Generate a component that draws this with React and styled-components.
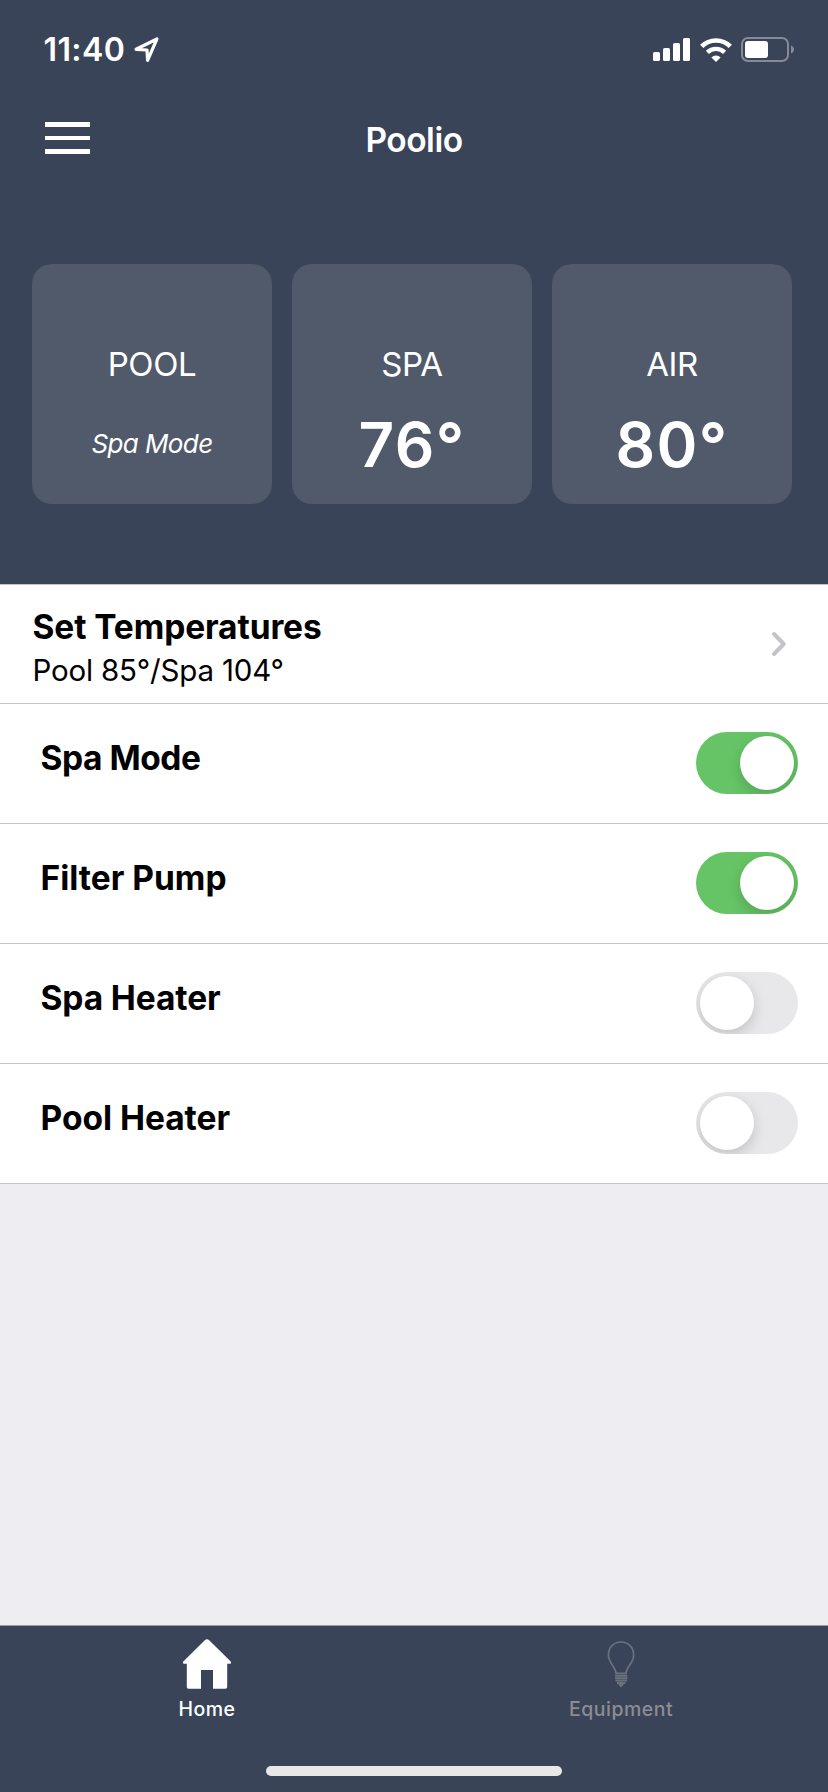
import React from 'react';
import styled, { createGlobalStyle } from 'styled-components';

class App extends React.Component {
  constructor(props) {
    super(props);
    this.state = {
      temps: [
        { name: 'POOL', note: 'Spa Mode' },
        { name: 'SPA', value: '76°' },
        { name: 'AIR', value: '80°' }
      ],
      switches: [
        { name: 'Spa Mode', on: true, tracking: -0.45 },
        { name: 'Filter Pump', on: true, tracking: 0 },
        { name: 'Spa Heater', on: false, tracking: -0.1 },
        { name: 'Pool Heater', on: false, tracking: -0.03 }
      ]
    };
    this.toggle = this.toggle.bind(this);
  }

  toggle(index) {
    this.setState({
      switches: this.state.switches.map((item, i) => (
        i === index ? { ...item, on: !item.on } : item
      ))
    });
  }

  render() {
    return (
      <Screen>
        <GlobalStyle />
        <Header>
          <StatusBar>
            <Time>11:40</Time>
            <LocationIcon />
            <StatusIcons>
              <SignalIcon />
              <WifiIcon />
              <BatteryIcon />
            </StatusIcons>
          </StatusBar>
          <NavBar>
            <MenuButton aria-label="Menu">
              <MenuLine />
              <MenuLine />
              <MenuLine />
            </MenuButton>
            <Title>Poolio</Title>
          </NavBar>
          <Cards>
            {this.state.temps.map((temp) => (
              <Card key={temp.name}>
                <CardName>{temp.name}</CardName>
                {temp.value ? <Degrees>{temp.value}</Degrees> : <Note>{temp.note}</Note>}
              </Card>
            ))}
          </Cards>
        </Header>

        <List>
          <TemperatureRow>
            <div>
              <RowTitle $tracking={-0.1}>Set Temperatures</RowTitle>
              <RowDetail>Pool 85°/Spa 104°</RowDetail>
            </div>
            <ChevronIcon />
          </TemperatureRow>
          {this.state.switches.map((item, i) => (
            <SwitchRow key={item.name}>
              <SwitchName $tracking={item.tracking}>{item.name}</SwitchName>
              <Track $on={item.on} role="switch" aria-checked={item.on} onClick={() => this.toggle(i)}>
                <Thumb />
              </Track>
            </SwitchRow>
          ))}
        </List>

        <Filler />

        <Footer>
          <Tabs>
            <Tab>
              <HomeIcon />
              <TabName $active $tracking={0.46}>Home</TabName>
            </Tab>
            <Tab>
              <BulbIcon />
              <TabName $tracking={0.5}>Equipment</TabName>
            </Tab>
          </Tabs>
          <HomeIndicator />
        </Footer>
      </Screen>
    );
  }
}

const LocationIcon = () => (
  <svg width="26" height="26" viewBox="0 0 26 26" fill="none">
    <path d="M2.1 12.3 22.9 2 13.600 23.300 13 13Z" stroke="#fff" strokeWidth="3.2" strokeLinejoin="round" />
  </svg>
);

const SignalIcon = () => (
  <svg width="37" height="23" viewBox="0 0 37 23" fill="#fff">
    <rect x="0" y="14" width="7" height="9" rx="1.6" />
    <rect x="10" y="10" width="7" height="13" rx="1.6" />
    <rect x="20" y="5" width="7" height="18" rx="1.6" />
    <rect x="30" y="0" width="7" height="23" rx="1.6" />
  </svg>
);

const WifiIcon = () => (
  <svg width="32" height="24" viewBox="0 0 32 24" fill="none">
    <path d="M1.7 8.400a20.200 20.200 0 0 1 28.600 0" stroke="#fff" strokeWidth="4.600" />
    <path d="M7.400 14.400a12.200 12.200 0 0 1 17.200 0" stroke="#fff" strokeWidth="4.400" />
    <path d="M16 24 11.400 19.500a6.500 6.500 0 0 1 9.200 0Z" fill="#fff" />
  </svg>
);

const BatteryIcon = () => (
  <svg width="53" height="25" viewBox="0 0 53 25">
    <rect x="1" y="1" width="46" height="23" rx="6" fill="none" stroke="#858b98" strokeWidth="2" />
    <rect x="4" y="4" width="23" height="17" rx="3" fill="#fff" />
    <path d="M50 8.500c4 1.400 4 6.600 0 8Z" fill="#858b98" />
  </svg>
);

const ChevronIcon = () => (
  <svg width="16" height="26" viewBox="0 0 16 26" fill="none">
    <path d="M3 3 12.800 13 3 23" stroke="#c4c4c8" strokeWidth="4" strokeLinecap="round" strokeLinejoin="round" />
  </svg>
);

const HomeIcon = () => (
  <svg width="50" height="50" viewBox="0 0 50 50" fill="#fff">
    <path d="M22.8 1.3q2.2-1.9 4.4 0l21.500 21.200q1.100 1.900-.9 2.200h-2.600v23.200q0 1.800-1.800 1.800H31V31H19v18.700H6.600q-1.800 0-1.800-1.800V24.700H2.200q-2-.3-.9-2.200Z" />
  </svg>
);

const BulbIcon = () => (
  <svg width="50" height="50" viewBox="0 0 50 50" fill="none" stroke="#6a7180" strokeWidth="1.7">
    <path d="M20 34.300c0-6-7.600-10.300-7.600-18.300C12.400 8.300 17.800 3 25 3s12.700 5.300 12.700 13c0 8-7.700 12.300-7.700 18.300Z" />
    <path d="M19 36.800h12.400M19 39.200h12.400M19.500 41.600h11.500M21 44h8.400" strokeWidth="1.900" />
    <path d="M23 45.500h4.200L25 48Z" fill="#6a7180" strokeWidth="1" />
  </svg>
);

const GlobalStyle = createGlobalStyle`
  body {
    margin: 0;
    background: #eeedf2;
    font-family: Inter, "Liberation Sans", sans-serif;
  }
  svg {
    display: block;
    flex-shrink: 0;
  }
`;

const Screen = styled.div`
  display: flex;
  flex-direction: column;
  height: 1792px;
  width: 828px;
  background: #eeedf2;
`;

const Header = styled.div`
  box-sizing: border-box;
  height: 584px;
  background: #3a4458;
  color: #fff;
`;

const StatusBar = styled.div`
  display: flex;
  align-items: center;
  box-sizing: border-box;
  height: 99px;
  padding: 0 34px 0 43.5px;
`;

const Time = styled.div`
  width: 90px;
  font-size: 32px;
  font-weight: 600;
  letter-spacing: 0.4px;
`;

const StatusIcons = styled.div`
  display: flex;
  align-items: center;
  gap: 9.5px;
  margin-left: auto;
`;

const NavBar = styled.div`
  display: grid;
  grid-template-columns: 1fr auto 1fr;
  align-items: center;
  height: 82px;
  padding: 0 44.5px;
`;

const MenuButton = styled.button`
  display: flex;
  flex-direction: column;
  gap: 8.6px;
  width: 45px;
  padding: 0;
  margin-bottom: 4px;
  border: 0;
  background: none;
`;

const MenuLine = styled.span`
  width: 45px;
  height: 4.8px;
  background: #fff;
`;

const Title = styled.div`
  font-size: 33.5px;
  font-weight: 600;
  letter-spacing: -0.5px;
`;

const Cards = styled.div`
  display: flex;
  gap: 20px;
  padding: 83px 32px 0;
`;

const Card = styled.div`
  box-sizing: border-box;
  width: 240px;
  height: 240px;
  padding-top: 80px;
  border-radius: 20px;
  background: #515a6a;
  text-align: center;
`;

const CardName = styled.div`
  font-size: 33px;
  line-height: 40px;
  letter-spacing: -0.4px;
`;

const Degrees = styled.div`
  margin-top: 31px;
  font-size: 62px;
  font-weight: 600;
  line-height: 60px;
  letter-spacing: 1.4px;
`;

const Note = styled.div`
  margin-top: 30px;
  font-size: 26px;
  font-style: italic;
  line-height: 59px;
  letter-spacing: -0.6px;
`;

const List = styled.div`
  border-top: 1px solid #c4c6cd;
  background: #fff;
  color: #000;
`;

const Row = styled.div`
  display: flex;
  align-items: center;
  justify-content: space-between;
  box-sizing: border-box;
  height: 120px;
  border-bottom: 1px solid #c5c5c7;
`;

const TemperatureRow = styled(Row)`
  height: 119px;
  padding: 8px 41px 0 32.5px;

  svg {
    margin-bottom: 8px;
  }
`;

const SwitchRow = styled(Row)`
  padding: 0 30px 0 40.5px;
`;

const RowTitle = styled.div`
  font-size: 33.5px;
  font-weight: 700;
  line-height: 44px;
  letter-spacing: ${(props) => props.$tracking}px;
`;

const RowDetail = styled.div`
  font-size: 29.5px;
  line-height: 43px;
  letter-spacing: -0.19px;
`;

const SwitchName = styled(RowTitle)`
  padding-bottom: 11px;
`;

const Track = styled.div`
  display: flex;
  justify-content: ${(props) => (props.$on ? 'flex-end' : 'flex-start')};
  box-sizing: border-box;
  width: 102px;
  height: 62px;
  margin-bottom: 1px;
  padding: 4px;
  border-radius: 31px;
  overflow: hidden;
  background: ${(props) => (props.$on ? '#66c466' : '#e8e8ea')};
`;

const Thumb = styled.div`
  width: 54px;
  height: 54px;
  border-radius: 50%;
  background: #fff;
  box-shadow: 0 5px 14px rgba(0, 0, 0, 0.17);
`;

const Filler = styled.div`
  flex: 1;
`;

const Footer = styled.div`
  display: flex;
  flex-direction: column;
  align-items: center;
  box-sizing: border-box;
  height: 167px;
  border-top: 1px solid #969ba7;
  background: #3a4458;
`;

const Tabs = styled.div`
  display: grid;
  grid-template-columns: 1fr 1fr;
  width: 100%;
  height: 140px;
`;

const Tab = styled.div`
  display: flex;
  flex-direction: column;
  align-items: center;
  padding-top: 13px;
`;

const TabName = styled.div`
  margin-top: 8px;
  font-size: 19.5px;
  font-weight: 500;
  line-height: 24px;
  letter-spacing: ${(props) => props.$tracking}px;
  color: ${(props) => (props.$active ? '#fff' : '#8c8d92')};
`;

const HomeIndicator = styled.div`
  width: 296px;
  height: 10px;
  border-radius: 5px;
  background: #e8e8e9;
`;

export default App;
